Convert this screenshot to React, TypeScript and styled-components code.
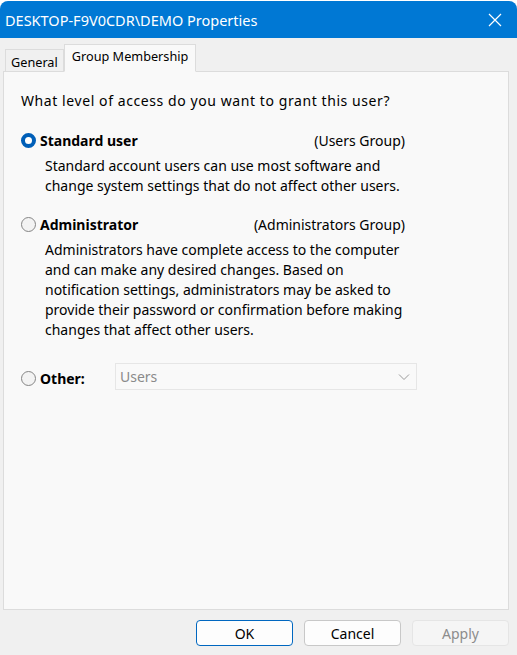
import React from 'react';
import styled, { createGlobalStyle } from 'styled-components';

const GlobalStyle = createGlobalStyle`
  html, body {
    margin: 0;
    padding: 0;
    background: #ffffff;
  }
  body {
    font-family: 'Noto Sans', 'Segoe UI', sans-serif;
    font-size: 14px;
    color: #000000;
  }
`;

const Window = styled.div`
  width: 517px;
  height: 654px;
  margin-top: 1px;
  background: #f0f0f0;
  border-radius: 8px 8px 0 0;
  overflow: hidden;
  display: flex;
  flex-direction: column;
`;

const TitleBar = styled.div`
  height: 37px;
  background: #0078d4;
  color: #ffffff;
  display: flex;
  align-items: center;
  justify-content: space-between;
  padding: 0 12px 0 5px;
  font-size: 14.5px;
`;

const CloseButton = styled.div`
  width: 20px;
  height: 20px;
  display: flex;
  align-items: center;
  justify-content: center;
`;

const Body = styled.div`
  flex: 1;
  display: flex;
  flex-direction: column;
  padding: 4px 8px 0 3px;
`;

const TabStrip = styled.div`
  display: flex;
  align-items: flex-end;
  height: 29px;
  padding-left: 2px;
  position: relative;
  z-index: 1;
`;

const Tab = styled.div<{ $active?: boolean }>`
  height: ${(p) => (p.$active ? '28px' : '22px')};
  padding: 0 ${(p) => (p.$active ? '7px' : '5px')};
  display: flex;
  align-items: center;
  background: ${(p) => (p.$active ? '#f9f9f9' : '#f0f0f0')};
  border: 1px solid #dcdcdc;
  border-bottom: ${(p) => (p.$active ? '1px solid #f9f9f9' : 'none')};
  margin-bottom: ${(p) => (p.$active ? '-1px' : '0')};
  box-sizing: border-box;
  font-size: 12.7px;
  padding-top: ${(p) => (p.$active ? '0' : '3px')};
  padding-bottom: ${(p) => (p.$active ? '4px' : '0')};
`;

const Panel = styled.div`
  height: 539px;
  background: #f9f9f9;
  border: 1px solid #dcdcdc;
  box-sizing: border-box;
  padding: 19px 0 0 17px;
  display: flex;
  flex-direction: column;
`;

const Question = styled.div`
  line-height: 20px;
  margin-bottom: 19px;
  letter-spacing: 0.58px;
`;

const OptionRow = styled.div`
  width: 384px;
  display: flex;
  align-items: center;
  height: 20px;
`;

const Radio = styled.span<{ $checked?: boolean }>`
  width: 15px;
  height: 15px;
  border-radius: 50%;
  box-sizing: border-box;
  margin-right: 4px;
  flex-shrink: 0;
  ${(p) =>
    p.$checked
      ? `
    background: #ffffff;
    border: 4.5px solid #005fb8;
  `
      : `
    background: #f3f3f3;
    border: 1px solid #858585;
  `}
`;

const OptionLabel = styled.span`
  font-weight: 700;
`;

const GroupName = styled.span`
  margin-left: auto;
`;

const Description = styled.div`
  padding-left: 24px;
  line-height: 20px;
  width: 370px;
  margin-top: 6px;
  margin-bottom: 18px;
`;

const OtherRow = styled.div`
  display: flex;
  align-items: center;
  margin-top: 5px;
`;

const OtherLabel = styled.div`
  display: flex;
  align-items: center;
  width: 94px;
  padding-top: 3px;
`;

const Select = styled.div`
  width: 302px;
  height: 27px;
  box-sizing: border-box;
  border: 1px solid #e6e6e6;
  background: #f9f9f9;
  color: #8a8a8a;
  display: flex;
  align-items: center;
  justify-content: space-between;
  padding: 0 6px 0 4px;
`;

const Footer = styled.div`
  flex: 1;
  display: flex;
  justify-content: flex-end;
  align-items: flex-start;
  gap: 11px;
  padding-top: 10px;
`;

const Button = styled.div<{ $primary?: boolean; $disabled?: boolean }>`
  width: 97px;
  height: 26px;
  box-sizing: border-box;
  border-radius: 4px;
  display: flex;
  align-items: center;
  justify-content: center;
  background: ${(p) => (p.$disabled ? '#f5f5f5' : '#fdfdfd')};
  border: 1px solid
    ${(p) => (p.$primary ? '#0067c0' : p.$disabled ? '#e5e5e5' : '#c8c8c8')};
  color: ${(p) => (p.$disabled ? '#8c8c8c' : '#000000')};
`;

export default function App() {
  return (
    <>
      <GlobalStyle />
      <Window>
        <TitleBar>
          <span>DESKTOP-F9V0CDR\DEMO Properties</span>
          <CloseButton>
            <svg width="14" height="14" viewBox="0 0 14 14">
              <path d="M1 1L13 13M13 1L1 13" stroke="#ffffff" strokeWidth="1.2" />
            </svg>
          </CloseButton>
        </TitleBar>
        <Body>
          <TabStrip>
            <Tab>General</Tab>
            <Tab $active>Group Membership</Tab>
          </TabStrip>
          <Panel>
            <Question>What level of access do you want to grant this user?</Question>
            <OptionRow>
              <Radio $checked />
              <OptionLabel>Standard user</OptionLabel>
              <GroupName>(Users Group)</GroupName>
            </OptionRow>
            <Description>
              Standard account users can use most software and change system
              settings that do not affect other users.
            </Description>
            <OptionRow>
              <Radio />
              <OptionLabel>Administrator</OptionLabel>
              <GroupName>(Administrators Group)</GroupName>
            </OptionRow>
            <Description>
              Administrators have complete access to the computer and can make
              any desired changes. Based on notification settings,
              administrators may be asked to provide their password or
              confirmation before making changes that affect other users.
            </Description>
            <OtherRow>
              <OtherLabel>
                <Radio />
                <OptionLabel>Other:</OptionLabel>
              </OtherLabel>
              <Select>
                <span>Users</span>
                <svg width="12" height="8" viewBox="0 0 12 8">
                  <path d="M1 1.5L6 6.5L11 1.5" stroke="#9a9a9a" strokeWidth="1" fill="none" />
                </svg>
              </Select>
            </OtherRow>
          </Panel>
          <Footer>
            <Button $primary>OK</Button>
            <Button>Cancel</Button>
            <Button $disabled>Apply</Button>
          </Footer>
        </Body>
      </Window>
    </>
  );
}
